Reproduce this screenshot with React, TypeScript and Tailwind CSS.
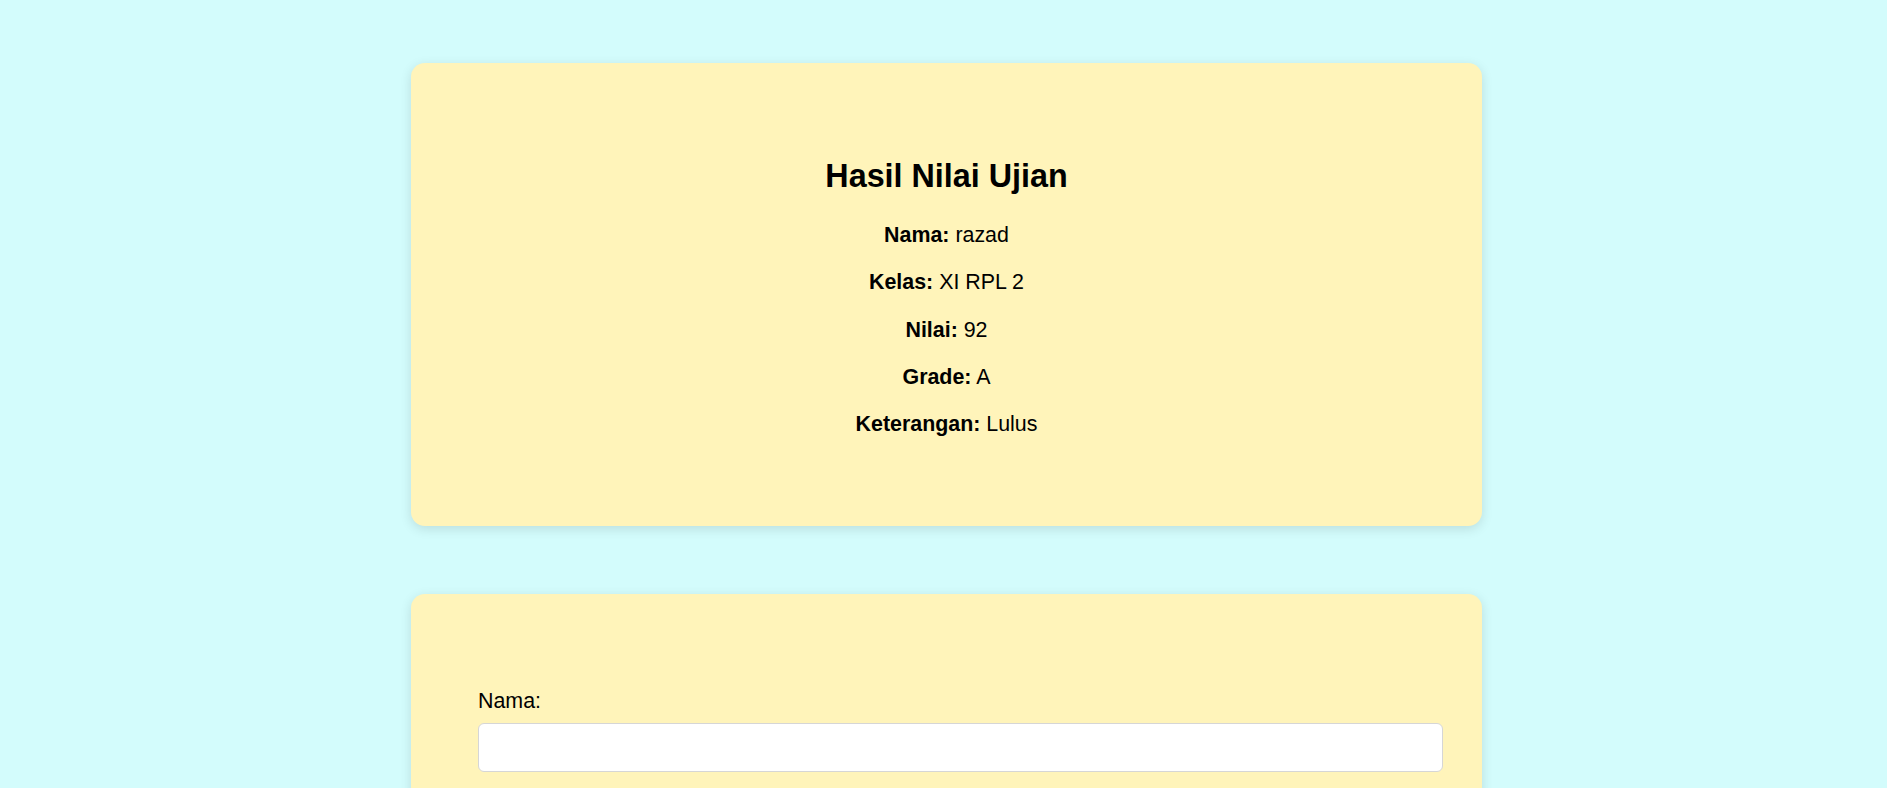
import React from 'react';

const rows = [
  { label: 'Nama:', value: 'razad' },
  { label: 'Kelas:', value: 'XI RPL 2' },
  { label: 'Nilai:', value: '92' },
  { label: 'Grade:', value: 'A' },
  { label: 'Keterangan:', value: 'Lulus' },
];

const App: React.FC = () => {
  return (
    <div className="min-h-screen bg-[#d3fcfc] font-['Liberation_Sans',Arial,sans-serif] text-black">
      <div className="flex flex-col items-center gap-[68px] pt-[63px] pl-[6px] pb-10">
        {/* Hasil */}
        <div className="w-[1071px] rounded-[14px] bg-[#fff4ba] shadow-[0_3px_12px_rgba(0,0,0,0.12)] pt-[95px] pb-[89px]">
          <h2 className="text-center text-[32.3px] font-bold leading-[37px]">Hasil Nilai Ujian</h2>
          <div className="mt-[27px] flex flex-col gap-[21.3px] text-center text-[21.4px] leading-[26px]">
            {rows.map((r) => (
              <p key={r.label}>
                <span className="font-bold">{r.label}</span> {r.value}
              </p>
            ))}
          </div>
        </div>

        {/* Form */}
        <div className="w-[1071px] rounded-[14px] bg-[#fff4ba] shadow-[0_3px_12px_rgba(0,0,0,0.12)] pt-[94px] pb-10 pl-[67px] pr-[39px]">
          <label className="block text-[21.4px] leading-[26px]">Nama:</label>
          <input
            type="text"
            className="mt-[9px] block h-[49px] w-full rounded-[6px] border border-[#d6d6d6] bg-white px-3 text-[21px] outline-none"
          />
        </div>
      </div>
    </div>
  );
};

export default App;
